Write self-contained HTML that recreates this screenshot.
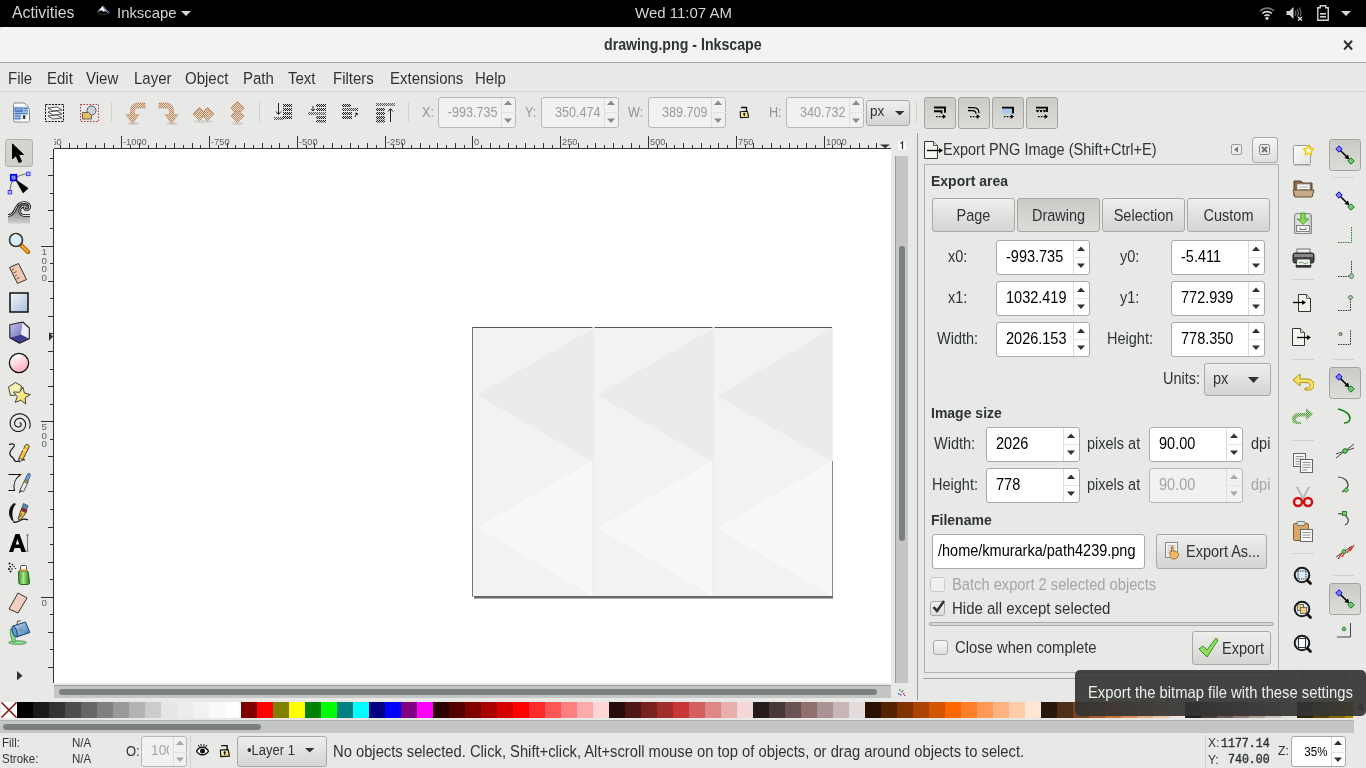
<!DOCTYPE html>
<html><head><meta charset="utf-8">
<style>
*{box-sizing:border-box;margin:0;padding:0}
html,body{width:1366px;height:768px;overflow:hidden;-webkit-font-smoothing:antialiased;background:#e8e8e7;font-family:"Liberation Sans",sans-serif;color:#2e3436;position:relative}
.a{position:absolute}
.t{position:absolute;white-space:nowrap;line-height:1;will-change:transform;transform:scaleY(1.1);transform-origin:0 0.85em}
#topbar .t{transform:none}
#topbar{left:0;top:0;width:1366px;height:27px;background:#000}
#topbar .t{color:#d3d3d3;font-size:15px}
#titlebar{left:0;top:27px;width:1366px;height:36px;background:#f3f3f3;border-radius:5px 5px 0 0;border-bottom:1px solid #a9aaa8;box-shadow:0 1px 0 #d6d6d4}
#menubar{left:0;top:63px;width:1366px;height:29px;background:#e8e8e7;border-bottom:1px solid #d4d4d2}
#menubar .t{font-size:14px;top:72px}
.ent{position:absolute;background:#fff;border:1px solid #a7a9aa;border-radius:3px}
.ent.dis{background:#f1f1f0;border-color:#b6b8b9}
.spin{position:absolute;top:0;bottom:0;border-left:1px solid #dcdcdc}
.btn{position:absolute;border:1px solid #a7a9aa;border-radius:3px;background:linear-gradient(#eeeeed,#d4d4d2)}
.btnp{position:absolute;border:1px solid #a3a5a4;border-radius:3px;background:linear-gradient(#cacac7,#dcdcd9)}
.sep{position:absolute;background:#d3d3d1}
</style></head><body>
<!-- top bar -->
<div id="topbar" class="a">
  <div class="t" style="left:12px;top:5px;font-size:15.8px">Activities</div>
  <div class="t" style="left:116.5px;top:5.5px;font-size:14.9px">Inkscape</div>
  <div class="t" style="left:635px;top:5px">Wed 11:07 AM</div>
</div>
<svg class="a" style="left:96px;top:5px" width="15" height="11" viewBox="0 0 15 11"><defs><linearGradient id="ikw" x1="0" y1="0" x2="1" y2="1"><stop offset="0" stop-color="#fff"/><stop offset=".6" stop-color="#ddd"/><stop offset="1" stop-color="#556"/></linearGradient></defs>
<path d="M0.8 7.3Q7 11.5 14 7.6" fill="none" stroke="#3a3a3a" stroke-width="1"/>
<path d="M6.8 0.8L14 7.6L12 8.2Q9 5 7.5 7 Q5 4.5 2.5 6.5L1.2 7z" fill="url(#ikw)"/>
<path d="M6.8 0.8L14 7.6L12.6 8.2L7.5 3z" fill="#2d4d80"/>
</svg><svg class="a" style="left:181px;top:11px" width="10" height="5"><path d="M0 0L5 5L10 0z" fill="#d3d3d3"/></svg><svg class="a" style="left:1259px;top:6px" width="16" height="14" viewBox="0 0 16 14"><path d="M1 5a10 10 0 0 1 14 0" fill="none" stroke="#777" stroke-width="1.6"/><path d="M3.2 7.5a7 7 0 0 1 9.6 0" fill="none" stroke="#d3d3d3" stroke-width="1.6"/><path d="M5.4 10a4 4 0 0 1 5.2 0" fill="none" stroke="#d3d3d3" stroke-width="1.6"/><circle cx="8" cy="12.3" r="1.6" fill="#d3d3d3"/></svg><svg class="a" style="left:1286px;top:6px" width="18" height="15" viewBox="0 0 18 15"><path d="M0.5 5h3l4-4v12l-4-4h-3z" fill="#d3d3d3"/><path d="M9 4.5a4 4 0 0 1 0 5M11 3a7 7 0 0 1 0 8M13 1.5a9 9 0 0 1 1 9" fill="none" stroke="#666" stroke-width="1.2"/><path d="M12 11l4 3.5M16 11l-4 3.5" stroke="#d3d3d3" stroke-width="1.5"/></svg><svg class="a" style="left:1317px;top:5px" width="12" height="16" viewBox="0 0 12 16"><path d="M.75 2.75h2.5v-2h5.5v2h2.5v12.5h-10.5z" fill="none" stroke="#d3d3d3" stroke-width="1.4"/><rect x="3" y="8" width="6" height="1.6" fill="#d3d3d3"/><rect x="3" y="11" width="6" height="1.6" fill="#d3d3d3"/></svg><svg class="a" style="left:1341px;top:11px" width="10" height="5"><path d="M0 0L5 5L10 0z" fill="#d3d3d3"/></svg><div id="titlebar" class="a"></div>
<div class="t" style="left:604px;top:38px;font-size:14.2px;font-weight:bold;color:#2e3436">drawing.png - Inkscape</div>
<div class="t" style="left:1342px;top:39px;font-size:14.5px;font-weight:bold;color:#2e3436">✕</div>
<div id="menubar" class="a">
</div>
<div class="t" style="left:7.5px;top:69.6px;font-size:15px;transform:scaleY(1.07);transform-origin:0 0">File</div>
<div class="t" style="left:46.5px;top:69.6px;font-size:15px;transform:scaleY(1.07);transform-origin:0 0">Edit</div>
<div class="t" style="left:86.1px;top:69.6px;font-size:15px;transform:scaleY(1.07);transform-origin:0 0">View</div>
<div class="t" style="left:134.4px;top:69.6px;font-size:15px;transform:scaleY(1.07);transform-origin:0 0">Layer</div>
<div class="t" style="left:185.4px;top:69.6px;font-size:15px;transform:scaleY(1.07);transform-origin:0 0">Object</div>
<div class="t" style="left:243.4px;top:69.6px;font-size:15px;transform:scaleY(1.07);transform-origin:0 0">Path</div>
<div class="t" style="left:288.1px;top:69.6px;font-size:15px;transform:scaleY(1.07);transform-origin:0 0">Text</div>
<div class="t" style="left:333.2px;top:69.6px;font-size:15px;transform:scaleY(1.07);transform-origin:0 0">Filters</div>
<div class="t" style="left:389.5px;top:69.6px;font-size:15px;transform:scaleY(1.07);transform-origin:0 0">Extensions</div>
<div class="t" style="left:475.0px;top:69.6px;font-size:15px;transform:scaleY(1.07);transform-origin:0 0">Help</div>


<!-- toolbar -->
<svg class="a" style="left:12px;top:102px" width="19" height="21" viewBox="0 0 19 21">
 <path d="M1.5 2.5Q1.5 1 3 1H12Q17.5 4 17.5 8.5V18.5Q17.5 20 16 20H3Q1.5 20 1.5 18.5z" fill="#fdfdfd" stroke="#858585" stroke-width="1"/>
 <rect x="2.2" y="4.6" width="14" height="13.6" fill="#a8c6ea"/>
 <rect x="2.6" y="5.6" width="8" height="4.6" fill="#4f7fbf"/>
 <path d="M3.5 8.5l2-1.5 2 1 2-2" stroke="#c8dcf4" stroke-width=".8" fill="none"/>
 <path d="M11.5 6.4h4.5M11.5 8.8h4.5M2.6 11.6h13.4M2.6 14.1h6M2.6 16.5h6" stroke="#4f7fbf" stroke-width="1.1"/>
 <rect x="9" y="12.6" width="8" height="6.8" fill="#fdfdfd"/>
 <path d="M10.3 13.6h3.6l-1.3 1.6 1.3 1.6h-3.6l1.3-1.6z" fill="#000"/>
</svg>
<svg class="a" style="left:45px;top:104px" width="20" height="18" viewBox="0 0 20 18">
 <rect x="0.5" y="0.5" width="18" height="17" fill="none" stroke="#000" stroke-dasharray="2,1.2"/>
 <path d="M3 4l9-1 5 3-9 1z" fill="#fff" stroke="#333" stroke-width=".8"/>
 <path d="M3 8l9-1 5 3-9 1z" fill="#fff" stroke="#333" stroke-width=".8"/>
 <path d="M3 12l9-1 5 3-9 1z" fill="#eee" stroke="#333" stroke-width=".8"/>
</svg>
<svg class="a" style="left:80px;top:104px" width="19" height="18" viewBox="0 0 19 18">
 <rect x="0.5" y="0.5" width="18" height="17" fill="none" stroke="#b02020" stroke-dasharray="1.5,1.5" stroke-width=".9"/>
 <circle cx="11.5" cy="6.5" r="4.5" fill="#c9d3de" stroke="#555"/>
 <path d="M2.5 8.5h6l3 3v3.5h-9z" fill="#e5c060" stroke="#555" stroke-width=".9"/>
</svg>
<div class="sep" style="left:111px;top:102px;width:1px;height:20px;background:#d0d0ce"></div>
<svg class="a" style="left:0;top:0;width:0;height:0"><defs>
<pattern id="bk" width="2" height="2" patternUnits="userSpaceOnUse"><rect width="2" height="2" fill="#eee2d6"/><rect width="1" height="1" fill="#b8845a"/><rect x="1" y="1" width="1" height="1" fill="#b8845a"/></pattern>
<pattern id="gk" width="2" height="2" patternUnits="userSpaceOnUse"><rect width="2" height="2" fill="#d8d8d8"/><rect width="1" height="1" fill="#222"/><rect x="1" y="1" width="1" height="1" fill="#222"/></pattern>
</defs></svg>
<svg class="a" style="left:124px;top:101px" width="24" height="26" viewBox="0 0 24 26">
 <ellipse cx="9" cy="22.5" rx="6" ry="1.5" fill="#000" opacity=".12"/>
 <path d="M21 2v5h-7c-3 0-3.5 1.5-3.5 3.5v3h4.5l-6.5 9-6.5-9h4.5v-4c0-5 3-7.5 8-7.5z" fill="url(#bk)" stroke="#c09070" stroke-width=".6"/>
</svg>
<svg class="a" style="left:157px;top:101px" width="24" height="26" viewBox="0 0 24 26">
 <ellipse cx="15" cy="22.5" rx="6" ry="1.5" fill="#000" opacity=".12"/>
 <path d="M2 2v5h7c3 0 3.5 1.5 3.5 3.5v3h-4.5l6.5 9 6.5-9h-4.5v-4c0-5-3-7.5-8-7.5z" fill="url(#bk)" stroke="#c09070" stroke-width=".6"/>
</svg>
<svg class="a" style="left:191px;top:104px" width="25" height="20" viewBox="0 0 25 20">
 <ellipse cx="12.5" cy="17.5" rx="10" ry="1.3" fill="#000" opacity=".1"/>
 <path d="M2 10l6.5-6.5 3 3v1.5h2v-1.5l3-3 6.5 6.5-6.5 6.5-3-3v-1.5h-2v1.5l-3 3z" fill="url(#bk)" stroke="#b07a50" stroke-width=".7"/>
</svg>
<svg class="a" style="left:229px;top:100px" width="17" height="26" viewBox="0 0 17 26">
 <ellipse cx="8.5" cy="23.5" rx="6" ry="1.3" fill="#000" opacity=".1"/>
 <path d="M8.5 1.5l6.5 6.5-3 3.5h-2v1.5h2l3 3-6.5 6.5-6.5-6.5 3-3h2v-1.5h-2l-3-3.5z" fill="url(#bk)" stroke="#b07a50" stroke-width=".7"/>
</svg>
<div class="sep" style="left:259px;top:102px;width:1px;height:20px;background:#d0d0ce"></div>
<svg class="a" style="left:273px;top:102px" width="21" height="21" viewBox="0 0 21 21">
 <path d="M5.5 1v11" stroke="#222" stroke-width="1"/><path d="M3 9.5l2.5 3 2.5-3" fill="none" stroke="#222" stroke-width="1"/>
 <rect x="10" y="2" width="9" height="3" fill="url(#gk)"/><rect x="10" y="6" width="9" height="3" fill="url(#gk)"/><rect x="10" y="10" width="9" height="3" fill="url(#gk)"/><rect x="10" y="14" width="9" height="3" fill="url(#gk)"/>
 <rect x="1" y="15" width="9" height="3" fill="url(#gk)" opacity=".75"/>
</svg>
<svg class="a" style="left:307px;top:102px" width="21" height="21" viewBox="0 0 21 21">
 <rect x="9" y="2" width="10" height="3" fill="url(#gk)"/><rect x="9" y="6" width="10" height="3" fill="url(#gk)"/>
 <rect x="1" y="10" width="18" height="3" fill="url(#gk)" opacity=".7"/>
 <rect x="9" y="14" width="10" height="3" fill="url(#gk)"/><rect x="9" y="18" width="10" height="2.5" fill="url(#gk)"/>
 <path d="M6 4v4.5M4 7l2 2 2-2" fill="none" stroke="#222" stroke-width="1"/>
</svg>
<svg class="a" style="left:341px;top:102px" width="21" height="21" viewBox="0 0 21 21">
 <rect x="1" y="2" width="9" height="3" fill="url(#gk)"/><rect x="1" y="6" width="16" height="3" fill="url(#gk)" opacity=".8"/>
 <rect x="1" y="10" width="10" height="3" fill="url(#gk)"/><rect x="1" y="14" width="10" height="3" fill="url(#gk)"/>
 <path d="M14 15l2-4M14 11.5l2-.5.5 2" fill="none" stroke="#222" stroke-width="1"/>
</svg>
<svg class="a" style="left:375px;top:102px" width="21" height="21" viewBox="0 0 21 21">
 <rect x="1" y="1" width="19" height="3" fill="url(#gk)" opacity=".7"/>
 <rect x="1" y="6" width="9" height="3" fill="url(#gk)"/><rect x="1" y="10" width="9" height="3" fill="url(#gk)"/><rect x="1" y="14" width="9" height="3" fill="url(#gk)"/><rect x="1" y="17.5" width="9" height="3" fill="url(#gk)"/>
 <path d="M15.5 20V7M13 9.5l2.5-3 2.5 3" fill="none" stroke="#222" stroke-width="1"/>
</svg>
<div class="sep" style="left:408px;top:102px;width:1px;height:20px;background:#d0d0ce"></div>

<div class="t" style="left:422px;top:107px;font-size:12.6px;color:#929495">X:</div><div class="ent dis" style="left:438px;top:97px;width:78px;height:31px"><div class="spin" style="left:62px;width:15px"><div class="a" style="left:0;right:0;top:14px;height:1px;background:#e2e2e2"></div><svg class="a" style="left:1px;top:2px" width="10" height="6"><path d="M1 5L5 0.6L9 5z" fill="#888a8b"/></svg><svg class="a" style="left:1px;top:20px" width="10" height="6"><path d="M1 0.6L5 5L9 0.6z" fill="#888a8b"/></svg></div></div><div class="t" style="left:430px;top:106.5px;width:67.5px;text-align:right;font-size:12.6px;color:#9a9c9d">-993.735</div><div class="t" style="left:525px;top:107px;font-size:12.6px;color:#929495">Y:</div><div class="ent dis" style="left:541px;top:97px;width:78px;height:31px"><div class="spin" style="left:62px;width:15px"><div class="a" style="left:0;right:0;top:14px;height:1px;background:#e2e2e2"></div><svg class="a" style="left:1px;top:2px" width="10" height="6"><path d="M1 5L5 0.6L9 5z" fill="#888a8b"/></svg><svg class="a" style="left:1px;top:20px" width="10" height="6"><path d="M1 0.6L5 5L9 0.6z" fill="#888a8b"/></svg></div></div><div class="t" style="left:533px;top:106.5px;width:67.5px;text-align:right;font-size:12.6px;color:#9a9c9d">350.474</div><div class="t" style="left:628px;top:107px;font-size:12.6px;color:#929495">W:</div><div class="ent dis" style="left:648px;top:97px;width:78px;height:31px"><div class="spin" style="left:62px;width:15px"><div class="a" style="left:0;right:0;top:14px;height:1px;background:#e2e2e2"></div><svg class="a" style="left:1px;top:2px" width="10" height="6"><path d="M1 5L5 0.6L9 5z" fill="#888a8b"/></svg><svg class="a" style="left:1px;top:20px" width="10" height="6"><path d="M1 0.6L5 5L9 0.6z" fill="#888a8b"/></svg></div></div><div class="t" style="left:640px;top:106.5px;width:67.5px;text-align:right;font-size:12.6px;color:#9a9c9d">389.709</div><svg class="a" style="left:739px;top:106px" width="11" height="13" viewBox="0 0 11 13"><defs><linearGradient id="lkg" x1="0" y1="0" x2="1" y2="1"><stop offset="0" stop-color="#fffef0"/><stop offset="1" stop-color="#e8c840"/></linearGradient></defs><path d="M2 1.5H7.5V5.5" fill="none" stroke="#111" stroke-width="1.3"/><path d="M1.2 5.7L8.4 5.3L9.6 11.2L1.6 11.8z" fill="url(#lkg)" stroke="#111" stroke-width="1.1" stroke-linejoin="round"/><circle cx="5.2" cy="7.8" r="1" fill="#000"/><rect x="4.8" y="8" width="0.9" height="2.2" fill="#000"/></svg><div class="t" style="left:769px;top:107px;font-size:12.6px;color:#929495">H:</div><div class="ent dis" style="left:786px;top:97px;width:78px;height:31px"><div class="spin" style="left:62px;width:15px"><div class="a" style="left:0;right:0;top:14px;height:1px;background:#e2e2e2"></div><svg class="a" style="left:1px;top:2px" width="10" height="6"><path d="M1 5L5 0.6L9 5z" fill="#888a8b"/></svg><svg class="a" style="left:1px;top:20px" width="10" height="6"><path d="M1 0.6L5 5L9 0.6z" fill="#888a8b"/></svg></div></div><div class="t" style="left:778px;top:106.5px;width:67.5px;text-align:right;font-size:12.6px;color:#9a9c9d">340.732</div><div class="btn" style="left:866px;top:100px;width:44px;height:26px"></div><div class="t" style="left:869.5px;top:104.8px;font-size:13.6px;color:#2e3436">px</div><svg class="a" style="left:894.5px;top:111px" width="10" height="6"><path d="M0 0L4.7 4.6L9.4 0z" fill="#2e3436"/></svg><div class="sep" style="left:916px;top:102px;width:1px;height:20px;background:#d0d0ce"></div><div class="btnp" style="left:924px;top:97px;width:32px;height:32px"></div><div class="btnp" style="left:958px;top:97px;width:32px;height:32px"></div><div class="btnp" style="left:992px;top:97px;width:32px;height:32px"></div><div class="btnp" style="left:1026px;top:97px;width:32px;height:32px"></div><svg class="a" style="left:933px;top:106px" width="14" height="14" viewBox="0 0 14 14"><path d="M1 1.5H12V6.8M1 5.2H8.5V7.5" fill="none" stroke="#000" stroke-width="1.9"/><path d="M3 10.6H10" stroke="#000" stroke-width="1.1" stroke-dasharray="1.6,1.2"/><path d="M9.8 8.3l3.2 2.3-3.2 2.3z" fill="#000"/></svg>
<svg class="a" style="left:967px;top:106px" width="14" height="14" viewBox="0 0 14 14"><path d="M1 1.6H6.5Q12 1.6 12 7M1 4.6H5.5Q9 4.6 9 7.8" fill="none" stroke="#000" stroke-width="1.2"/><path d="M3 10.6H10" stroke="#000" stroke-width="1.1" stroke-dasharray="1.6,1.2"/><path d="M9.8 8.3l3.2 2.3-3.2 2.3z" fill="#000"/></svg>
<svg class="a" style="left:1001px;top:106px" width="14" height="14" viewBox="0 0 14 14"><rect x="1" y="2.4" width="10" height="5.4" fill="#a9c9ec"/><path d="M1 1.6H12V7.5" fill="none" stroke="#000" stroke-width="1.9"/><path d="M3 10.6H10" stroke="#000" stroke-width="1.1" stroke-dasharray="1.6,1.2"/><path d="M9.8 8.3l3.2 2.3-3.2 2.3z" fill="#000"/></svg>
<svg class="a" style="left:1035px;top:106px" width="14" height="14" viewBox="0 0 14 14"><path d="M1 1.6H12V6" fill="none" stroke="#000" stroke-width="1.9"/><g fill="#000"><circle cx="2.5" cy="5.2" r="1.1"/><circle cx="6" cy="5.2" r="1.1"/><circle cx="9.5" cy="5.2" r="1.1"/></g><path d="M1 4l1.5 1.2L4 4M4.5 4l1.5 1.2L7.5 4M8 4l1.5 1.2L11 4" fill="none" stroke="#000" stroke-width=".8"/><path d="M3 10.6H10" stroke="#000" stroke-width="1.1" stroke-dasharray="1.6,1.2"/><path d="M9.8 8.3l3.2 2.3-3.2 2.3z" fill="#000"/></svg>

<!-- toolbox -->
<div class="btnp" style="left:5px;top:139px;width:28px;height:28px;border-color:#b0b1b0;background:linear-gradient(#d5d5d2,#cececb)"></div>
<svg class="a" style="left:11px;top:143px" width="15" height="21" viewBox="0 0 15 21"><path d="M1.5 1v15l3.5-3.5 3 7 2.5-1-3-7h5z" fill="#000" stroke="#000" stroke-linejoin="round"/></svg>
<svg class="a" style="left:4px;top:168px" width="30" height="30" viewBox="0 0 30 30">
<path d="M6 24C6 15 9 7.5 24 5.5" fill="none" stroke="#707070" stroke-width="1.1"/>
<rect x="6.8" y="6.8" width="5.6" height="5.6" fill="#a0a0e8" stroke="#0000ff" stroke-width="1.7"/>
<path d="M8.5 10.5l2-2" stroke="#0000ff" stroke-width=".8"/>
<rect x="22.6" y="4.2" width="3.4" height="3.4" fill="#c0c0ff" stroke="#3a3aff" stroke-width="1"/>
<rect x="4.2" y="22.5" width="3.4" height="3.4" fill="#c0c0ff" stroke="#3a3aff" stroke-width="1"/>
<path d="M11.7 11.7L24.2 20.3L19.1 25z" fill="#000" stroke="#000" stroke-width=".6" stroke-linejoin="round"/>
</svg>
<svg class="a" style="left:4px;top:198px" width="30" height="30" viewBox="0 0 30 30">
<defs><linearGradient id="twg" x1="0" y1="0" x2="0" y2="1"><stop offset="0" stop-color="#606060"/><stop offset="1" stop-color="#d0d0d0"/></linearGradient></defs>
<path d="M4 17.5C8 17.5 10 15 12 10C14 6 17 4.5 20 4.5C24 4.5 26.5 7 25.5 10C24.5 12.5 21 12.5 20.5 10.5C20 9 21.5 8.5 22.5 9C21 7 17 8 16 11.5C15 14.5 17 17.5 20 17.5H26V25.5H4z" fill="url(#twg)"/>
<path d="M4 17.5C8 17.5 10 15 12 10C14 6 17 4.5 20 4.5C24 4.5 26.5 7 25.5 10C24.5 12.5 21 12.5 20.5 10.5C20 9 21.5 8.5 22.5 9C21 7 17 8 16 11.5C15 14.5 17 17.5 20 17.5H26" fill="none" stroke="#111" stroke-width="2.6"/>
<path d="M4 17.5C8 17.5 10 15 12 10C14 6 17 4.5 20 4.5C24 4.5 26.5 7 25.5 10C24.5 12.5 21 12.5 20.5 10.5C20 9 21.5 8.5 22.5 9C21 7 17 8 16 11.5C15 14.5 17 17.5 20 17.5H26" fill="none" stroke="#fff" stroke-width=".9"/>
</svg>
<svg class="a" style="left:8px;top:232px" width="22" height="22" viewBox="0 0 22 22"><path d="M13 13l7 7" stroke="#b06000" stroke-width="4.5" stroke-linecap="round"/><path d="M13.5 13.5l6 6" stroke="#f0a030" stroke-width="2.5" stroke-linecap="round"/><circle cx="8" cy="8" r="6.5" fill="#d8ecf8" stroke="#333" stroke-width="1.6"/><path d="M4.5 6a4 4 0 0 1 4-3" stroke="#fff" stroke-width="1.5" fill="none"/></svg>
<svg class="a" style="left:8px;top:262px" width="20" height="22" viewBox="0 0 20 22"><path d="M1.5 5.5l9-4 8 16-9 4z" fill="#f0c8b0" stroke="#333" stroke-width="1"/><path d="M4 8l2-1M5.5 11l3-1.5M7 14l2-1M8.5 17l3-1.5" stroke="#333" stroke-width=".8"/></svg>
<svg class="a" style="left:9px;top:292px" width="20" height="21" viewBox="0 0 20 21"><defs><linearGradient id="rg" x1="0" y1="0" x2="1" y2="1"><stop offset="0" stop-color="#f4f8fc"/><stop offset="1" stop-color="#a8bcd8"/></linearGradient></defs><rect x="1" y="1" width="18" height="19" fill="url(#rg)" stroke="#000" stroke-width="1.4"/></svg>
<svg class="a" style="left:8px;top:321px" width="23" height="24" viewBox="0 0 23 24">
<defs><linearGradient id="bxl" x1="0" y1="0" x2="1" y2="1"><stop offset="0" stop-color="#c8c8ec"/><stop offset="1" stop-color="#7070b8"/></linearGradient></defs>
<path d="M1.8 3.8L14.8 1L13 13.6L1.8 16.8z" fill="url(#bxl)"/>
<path d="M14.8 1L21.3 7V17.7L13 13.6z" fill="#ececfc"/>
<path d="M13 13.6L21.3 17.7L11.5 22.2L1.8 16.8z" fill="#3e3e90"/>
<path d="M1.8 3.8L14.8 1L21.3 7V17.7L11.5 22.2L1.8 16.8z" fill="none" stroke="#222" stroke-width="1.1" stroke-linejoin="round"/>
</svg>
<svg class="a" style="left:8px;top:352px" width="22" height="22" viewBox="0 0 22 22"><defs><linearGradient id="cg2" x1=".2" y1=".1" x2=".7" y2="1"><stop offset="0" stop-color="#ffffff"/><stop offset="1" stop-color="#ffa8b8"/></linearGradient></defs><circle cx="11" cy="11" r="9.6" fill="url(#cg2)" stroke="#111" stroke-width="1.3"/></svg>
<svg class="a" style="left:7px;top:381px" width="24" height="25" viewBox="0 0 24 25"><defs><linearGradient id="stg" x1="0" y1="0" x2="1" y2="1"><stop offset="0" stop-color="#fffad0"/><stop offset="1" stop-color="#f0d040"/></linearGradient></defs><path d="M1.5 6L8.5 1.5L14.5 5L13 13.5L3.5 14.5z" fill="#f8f0b0" stroke="#333" stroke-width=".9" stroke-linejoin="round"/><path d="M15.84 6.10 L17.45 12.01 L23.38 13.53 L18.26 16.88 L18.64 22.99 L13.87 19.15 L8.18 21.41 L10.36 15.69 L6.45 10.97 L12.57 11.27z" fill="url(#stg)" stroke="#333" stroke-width=".9" stroke-linejoin="round"/></svg>
<svg class="a" style="left:7px;top:411px" width="24" height="24" viewBox="0 0 24 24"><path d="M12.51 11.71 L12.56 11.71 L12.61 11.71 L12.66 11.71 L12.71 11.71 L12.76 11.71 L12.82 11.72 L12.87 11.73 L12.92 11.74 L12.98 11.76 L13.03 11.78 L13.09 11.80 L13.14 11.82 L13.20 11.84 L13.25 11.87 L13.30 11.90 L13.35 11.93 L13.41 11.97 L13.46 12.01 L13.51 12.05 L13.56 12.09 L13.60 12.14 L13.65 12.18 L13.69 12.24 L13.74 12.29 L13.78 12.34 L13.82 12.40 L13.86 12.46 L13.89 12.52 L13.93 12.59 L13.96 12.65 L13.99 12.72 L14.02 12.79 L14.04 12.87 L14.06 12.94 L14.08 13.01 L14.10 13.09 L14.11 13.17 L14.12 13.25 L14.13 13.33 L14.13 13.41 L14.14 13.49 L14.13 13.58 L14.13 13.66 L14.12 13.75 L14.11 13.83 L14.09 13.92 L14.07 14.01 L14.05 14.09 L14.03 14.18 L14.00 14.26 L13.96 14.35 L13.93 14.43 L13.89 14.52 L13.84 14.60 L13.80 14.68 L13.74 14.77 L13.69 14.85 L13.63 14.92 L13.57 15.00 L13.51 15.08 L13.44 15.15 L13.37 15.22 L13.29 15.29 L13.21 15.36 L13.13 15.42 L13.05 15.49 L12.96 15.54 L12.87 15.60 L12.78 15.65 L12.68 15.71 L12.59 15.75 L12.49 15.80 L12.38 15.84 L12.28 15.87 L12.17 15.91 L12.06 15.94 L11.95 15.96 L11.84 15.98 L11.72 16.00 L11.61 16.02 L11.49 16.03 L11.37 16.03 L11.25 16.03 L11.13 16.03 L11.01 16.02 L10.89 16.01 L10.77 15.99 L10.64 15.97 L10.52 15.94 L10.40 15.91 L10.28 15.87 L10.16 15.83 L10.04 15.78 L9.92 15.73 L9.80 15.68 L9.68 15.62 L9.57 15.55 L9.46 15.49 L9.34 15.41 L9.24 15.33 L9.13 15.25 L9.02 15.16 L8.92 15.07 L8.82 14.98 L8.73 14.88 L8.63 14.77 L8.54 14.66 L8.46 14.55 L8.37 14.44 L8.29 14.32 L8.22 14.19 L8.15 14.07 L8.08 13.94 L8.02 13.80 L7.96 13.67 L7.91 13.53 L7.86 13.39 L7.81 13.24 L7.78 13.10 L7.74 12.95 L7.71 12.80 L7.69 12.65 L7.67 12.49 L7.66 12.34 L7.66 12.18 L7.66 12.02 L7.66 11.86 L7.67 11.70 L7.69 11.55 L7.71 11.39 L7.74 11.23 L7.78 11.07 L7.82 10.91 L7.86 10.75 L7.92 10.59 L7.97 10.44 L8.04 10.28 L8.11 10.13 L8.18 9.98 L8.27 9.83 L8.35 9.68 L8.45 9.54 L8.55 9.40 L8.65 9.26 L8.76 9.12 L8.88 8.99 L9.00 8.86 L9.13 8.74 L9.26 8.62 L9.39 8.50 L9.53 8.39 L9.68 8.29 L9.83 8.18 L9.98 8.09 L10.14 7.99 L10.31 7.91 L10.47 7.83 L10.64 7.75 L10.82 7.68 L10.99 7.62 L11.17 7.56 L11.35 7.51 L11.54 7.46 L11.73 7.42 L11.92 7.39 L12.11 7.37 L12.30 7.35 L12.50 7.34 L12.69 7.33 L12.89 7.34 L13.09 7.35 L13.29 7.36 L13.48 7.39 L13.68 7.42 L13.88 7.46 L14.08 7.50 L14.27 7.56 L14.47 7.62 L14.66 7.69 L14.85 7.76 L15.04 7.84 L15.23 7.93 L15.41 8.03 L15.59 8.13 L15.77 8.24 L15.95 8.36 L16.12 8.48 L16.29 8.61 L16.45 8.75 L16.61 8.89 L16.77 9.04 L16.92 9.20 L17.06 9.36 L17.20 9.53 L17.34 9.70 L17.47 9.88 L17.59 10.06 L17.71 10.25 L17.82 10.45 L17.92 10.65 L18.02 10.85 L18.11 11.05 L18.19 11.27 L18.26 11.48 L18.33 11.70 L18.39 11.92 L18.45 12.14 L18.49 12.37 L18.53 12.60 L18.55 12.83 L18.58 13.06 L18.59 13.30 L18.59 13.53 L18.59 13.77 L18.57 14.00 L18.55 14.24 L18.52 14.48 L18.48 14.71 L18.43 14.95 L18.38 15.18 L18.31 15.42 L18.24 15.65 L18.16 15.88 L18.07 16.11 L17.97 16.33 L17.86 16.56 L17.75 16.78 L17.62 16.99 L17.49 17.20 L17.35 17.41 L17.20 17.62 L17.05 17.81 L16.89 18.01 L16.72 18.20 L16.54 18.38 L16.35 18.56 L16.16 18.73 L15.96 18.89 L15.76 19.05 L15.55 19.20 L15.33 19.35 L15.11 19.48 L14.88 19.61 L14.65 19.73 L14.41 19.85 L14.17 19.95 L13.92 20.05 L13.67 20.14 L13.41 20.22 L13.15 20.29 L12.89 20.35 L12.62 20.40 L12.36 20.44 L12.09 20.48 L11.82 20.50 L11.54 20.51 L11.27 20.52 L10.99 20.51 L10.72 20.50 L10.44 20.47 L10.16 20.44 L9.89 20.39 L9.61 20.34 L9.34 20.27 L9.07 20.20 L8.80 20.11 L8.53 20.02 L8.27 19.91 L8.00 19.80 L7.75 19.68 L7.49 19.54 L7.24 19.40 L6.99 19.25 L6.75 19.09 L6.52 18.92 L6.29 18.74 L6.06 18.55 L5.84 18.35 L5.63 18.15 L5.43 17.93 L5.23 17.71 L5.04 17.49 L4.86 17.25 L4.68 17.01 L4.51 16.76 L4.36 16.50 L4.21 16.24 L4.07 15.97 L3.94 15.70 L3.81 15.42 L3.70 15.14 L3.60 14.85 L3.51 14.55 L3.43 14.26 L3.35 13.96 L3.29 13.65 L3.24 13.35 L3.20 13.04 L3.18 12.73 L3.16 12.41 L3.15 12.10 L3.16 11.78 L3.17 11.47 L3.20 11.15 L3.24 10.84 L3.29 10.52 L3.35 10.21 L3.42 9.90 L3.51 9.59 L3.60 9.28 L3.71 8.97 L3.83 8.67 L3.96 8.37 L4.10 8.08 L4.25 7.79 L4.41 7.50 L4.58 7.22 L4.76 6.95 L4.95 6.68 L5.15 6.42 L5.37 6.16 L5.59 5.91 L5.82 5.67 L6.06 5.44 L6.31 5.21 L6.56 4.99 L6.83 4.78 L7.10 4.58 L7.38 4.39 L7.67 4.21 L7.97 4.04 L8.27 3.88 L8.58 3.73 L8.89 3.59 L9.21 3.46 L9.54 3.35 L9.87 3.24 L10.20 3.15 L10.54 3.06 L10.88 2.99 L11.23 2.93 L11.58 2.89 L11.93 2.85 L12.28 2.83 L12.63 2.82 L12.99 2.83 L13.34 2.84 L13.70 2.87 L14.05 2.91 L14.41 2.97 L14.76 3.03 L15.11 3.11 L15.46 3.20 L15.81 3.31 L16.15 3.42 L16.49 3.55 L16.83 3.70 L17.16 3.85 L17.48 4.02 L17.80 4.19 L18.12 4.38 L18.43 4.59 L18.73 4.80 L19.03 5.02 L19.32 5.26 L19.60 5.50 L19.87 5.76 L20.13 6.03 L20.39 6.30 L20.63 6.59 L20.87 6.88 L21.09 7.18 L21.31 7.50 L21.51 7.82 L21.70 8.15 L21.89 8.48 L22.06 8.82 L22.21 9.17 L22.36 9.53 L22.49 9.89 L22.62 10.26 L22.72 10.63 L22.82 11.00 L22.90 11.38 L22.97 11.77 L23.02 12.15 L23.07 12.54 L23.09 12.94 L23.11 13.33 L23.11 13.72 L23.09 14.12 L23.06 14.51 L23.02 14.91 L22.97 15.30 L22.89 15.69 L22.81 16.08 L22.71 16.47 L22.60 16.86 L22.47 17.24 L22.33 17.62" fill="none" stroke="#1a1a1a" stroke-width="1.15"/></svg>
<svg class="a" style="left:7px;top:442px" width="24" height="23" viewBox="0 0 24 23">
<path d="M2 2.5c3-1 6-1 5 2-1 2-5 4-4 8 1 3 3 2 4 5 .5 2 3 2.5 5 1.5 2-1 4-2 6-1" fill="none" stroke="#111" stroke-width="1.2"/>
<path d="M12 16l6.5-13c.8-1.6 4.5.2 3.7 1.8l-6.5 13-3.5 2z" fill="#f8c838" stroke="#333" stroke-width=".9"/>
<path d="M14 6.5l4.5 2.2" stroke="#fff6c0" stroke-width="1.2"/>
<path d="M12 16l3.7 1.8-3.5 2.2z" fill="#fff" stroke="#333" stroke-width=".8"/>
<path d="M12.2 18.5l.9.4-1 .8z" fill="#000"/>
</svg>
<svg class="a" style="left:7px;top:472px" width="24" height="23" viewBox="0 0 24 23">
<path d="M1.5 2.5h12c-4 3-8 7-6 16h-6" fill="none" stroke="#111" stroke-width="1.1"/>
<path d="M13 18l4-8.5 3.5 1.7-4 8.5z" fill="#e8e8e8" stroke="#333" stroke-width=".8"/>
<path d="M17 9.5l1-2 3.5 1.7-1 2z" fill="#f0c030" stroke="#333" stroke-width=".7"/>
<path d="M18 7.5l2.5-5.5c.7-1.5 3.5-.2 2.8 1.4l-2.5 5.8z" fill="#6aa0d0" stroke="#2a4a70" stroke-width=".8"/>
<path d="M13 18l-1.5 3.5 3-2z" fill="#222"/>
</svg>
<svg class="a" style="left:7px;top:502px" width="24" height="23" viewBox="0 0 24 23">
<path d="M7 1c-4 3-6 8-4.5 13 1 3 2.5 5 4.5 6-1-3-2-6-1.5-10 .3-3 1.5-6 3.5-8z" fill="#111"/>
<path d="M6 20c3 1 6-1 8-2 2-1 5-1 7 0" fill="none" stroke="#111" stroke-width="1.3"/>
<path d="M11 17l3-9 5 2.5-5.5 7.5z" fill="#f0c040" stroke="#333" stroke-width=".9"/>
<path d="M14 8l1-2.5 5 2.5-1 2.5z" fill="#c02020" stroke="#333" stroke-width=".7"/>
<path d="M15 5.5l1.5-4 4.5 2.2-1.5 4.3z" fill="#5a90c0" stroke="#333" stroke-width=".7"/>
<path d="M12.5 15.5l2.5-4" stroke="#333" stroke-width=".8"/>
</svg>
<svg class="a" style="left:8px;top:532px" width="22" height="22" viewBox="0 0 22 22"><path d="M1 20l6.5-18h4l6.5 18h-4.5l-1.3-4h-5.7l-1.3 4zM7.7 12.5h3.6l-1.8-5.5z" fill="#000"/><path d="M18 3h3M19.5 3v16M18 19h3" stroke="#555" stroke-width=".8"/></svg>
<svg class="a" style="left:7px;top:562px" width="24" height="24" viewBox="0 0 24 24">
<defs><linearGradient id="spg" x1="0" y1="0" x2="1" y2="0"><stop offset="0" stop-color="#3a9020"/><stop offset=".45" stop-color="#a8e888"/><stop offset="1" stop-color="#2a7a18"/></linearGradient></defs>
<g fill="#111"><circle cx="2.5" cy="1.6" r="1"/><circle cx="5.5" cy="2.6" r=".8"/><circle cx="3.2" cy="4.6" r=".9"/><circle cx="7" cy="4.5" r=".7"/><circle cx="2" cy="7" r="1"/><circle cx="5" cy="7" r=".8"/><circle cx="8.5" cy="6.5" r=".6"/><circle cx="3.5" cy="9.5" r="1"/></g>
<path d="M11.5 10.5Q11.5 8.5 13.5 8.5H19Q21 8.5 21.3 10.5L22.5 20.5Q22.7 22.5 20.5 22.5H14Q12 22.5 11.8 20.5z" fill="url(#spg)" stroke="#1f5a10" stroke-width=".9"/>
<rect x="13.5" y="3.5" width="6" height="5.5" rx="1.2" fill="#f8f8f8" stroke="#333" stroke-width=".9"/>
<rect x="13.5" y="7.2" width="6" height="1.8" fill="#f0a030"/>
</svg>
<svg class="a" style="left:8px;top:592px" width="20" height="22" viewBox="0 0 20 22"><path d="M1 17l9-16 9 5-9 15z" fill="#f5d0c0" stroke="#333" stroke-width="1"/></svg>
<svg class="a" style="left:7px;top:620px" width="24" height="25" viewBox="0 0 24 25">
<defs><linearGradient id="bkg" x1="0" y1="0" x2="1" y2="1"><stop offset="0" stop-color="#c0e0f8"/><stop offset="1" stop-color="#3a78b8"/></linearGradient></defs>
<ellipse cx="10.5" cy="22.6" rx="9" ry="1.8" fill="#98dc98" stroke="#3a8a40" stroke-width=".8"/>
<path d="M3.5 9C2.5 14 4.5 18 5.5 22L9 22C8 17.5 7 13 8.5 9z" fill="#88d488" stroke="#3a8a40" stroke-width=".7"/>
<path d="M6 6L18.5 2L22.8 12.5L9.5 17z" fill="url(#bkg)" stroke="#1a3a60" stroke-width="1"/>
<ellipse cx="7.6" cy="11.5" rx="2.2" ry="5.6" transform="rotate(-18 7.6 11.5)" fill="#5a9ad0" stroke="#1a3a60" stroke-width=".9"/>
<path d="M10 5.5L10.5 1H14" fill="none" stroke="#444" stroke-width=".9"/>
<circle cx="13.5" cy="9.5" r="1" fill="#eee" stroke="#333" stroke-width=".6"/>
</svg><svg class="a" style="left:17px;top:670.5px" width="6" height="10"><path d="M0 0L5.5 4.8L0 9.6z" fill="#2e3436"/></svg>

<!-- canvas -->
<svg class="a" style="left:54px;top:133px;will-change:transform" width="837" height="16" viewBox="0 0 837 16"><text x="-16" y="11.5" font-size="9.3" fill="#5d5f60" font-family="Liberation Sans">-1250</text><rect x="0" y="15" width="837" height="1" fill="#2e3436"/><path d="M6.5 12V15" stroke="#2e3436" stroke-width="1"/><path d="M15.5 10V15" stroke="#2e3436" stroke-width="1"/><path d="M23.5 12V15" stroke="#2e3436" stroke-width="1"/><path d="M32.5 10V15" stroke="#2e3436" stroke-width="1"/><path d="M41.5 12V15" stroke="#2e3436" stroke-width="1"/><path d="M50.5 10V15" stroke="#2e3436" stroke-width="1"/><path d="M59.5 12V15" stroke="#2e3436" stroke-width="1"/><path d="M67.5 3V15" stroke="#2e3436" stroke-width="1"/><text x="69.0" y="11.5" font-size="9.3" fill="#5d5f60" font-family="Liberation Sans">-1000</text><path d="M76.5 12V15" stroke="#2e3436" stroke-width="1"/><path d="M85.5 10V15" stroke="#2e3436" stroke-width="1"/><path d="M94.5 12V15" stroke="#2e3436" stroke-width="1"/><path d="M102.5 10V15" stroke="#2e3436" stroke-width="1"/><path d="M111.5 12V15" stroke="#2e3436" stroke-width="1"/><path d="M120.5 10V15" stroke="#2e3436" stroke-width="1"/><path d="M129.5 12V15" stroke="#2e3436" stroke-width="1"/><path d="M138.5 10V15" stroke="#2e3436" stroke-width="1"/><path d="M146.5 12V15" stroke="#2e3436" stroke-width="1"/><path d="M155.5 3V15" stroke="#2e3436" stroke-width="1"/><text x="157.0" y="11.5" font-size="9.3" fill="#5d5f60" font-family="Liberation Sans">-750</text><path d="M164.5 12V15" stroke="#2e3436" stroke-width="1"/><path d="M173.5 10V15" stroke="#2e3436" stroke-width="1"/><path d="M181.5 12V15" stroke="#2e3436" stroke-width="1"/><path d="M190.5 10V15" stroke="#2e3436" stroke-width="1"/><path d="M199.5 12V15" stroke="#2e3436" stroke-width="1"/><path d="M208.5 10V15" stroke="#2e3436" stroke-width="1"/><path d="M217.5 12V15" stroke="#2e3436" stroke-width="1"/><path d="M225.5 10V15" stroke="#2e3436" stroke-width="1"/><path d="M234.5 12V15" stroke="#2e3436" stroke-width="1"/><path d="M243.5 3V15" stroke="#2e3436" stroke-width="1"/><text x="245.0" y="11.5" font-size="9.3" fill="#5d5f60" font-family="Liberation Sans">-500</text><path d="M252.5 12V15" stroke="#2e3436" stroke-width="1"/><path d="M260.5 10V15" stroke="#2e3436" stroke-width="1"/><path d="M269.5 12V15" stroke="#2e3436" stroke-width="1"/><path d="M278.5 10V15" stroke="#2e3436" stroke-width="1"/><path d="M287.5 12V15" stroke="#2e3436" stroke-width="1"/><path d="M296.5 10V15" stroke="#2e3436" stroke-width="1"/><path d="M304.5 12V15" stroke="#2e3436" stroke-width="1"/><path d="M313.5 10V15" stroke="#2e3436" stroke-width="1"/><path d="M322.5 12V15" stroke="#2e3436" stroke-width="1"/><path d="M331.5 3V15" stroke="#2e3436" stroke-width="1"/><text x="333.0" y="11.5" font-size="9.3" fill="#5d5f60" font-family="Liberation Sans">-250</text><path d="M339.5 12V15" stroke="#2e3436" stroke-width="1"/><path d="M348.5 10V15" stroke="#2e3436" stroke-width="1"/><path d="M357.5 12V15" stroke="#2e3436" stroke-width="1"/><path d="M366.5 10V15" stroke="#2e3436" stroke-width="1"/><path d="M375.5 12V15" stroke="#2e3436" stroke-width="1"/><path d="M383.5 10V15" stroke="#2e3436" stroke-width="1"/><path d="M392.5 12V15" stroke="#2e3436" stroke-width="1"/><path d="M401.5 10V15" stroke="#2e3436" stroke-width="1"/><path d="M410.5 12V15" stroke="#2e3436" stroke-width="1"/><path d="M418.5 3V15" stroke="#2e3436" stroke-width="1"/><text x="420.0" y="11.5" font-size="9.3" fill="#5d5f60" font-family="Liberation Sans">0</text><path d="M427.5 12V15" stroke="#2e3436" stroke-width="1"/><path d="M436.5 10V15" stroke="#2e3436" stroke-width="1"/><path d="M445.5 12V15" stroke="#2e3436" stroke-width="1"/><path d="M454.5 10V15" stroke="#2e3436" stroke-width="1"/><path d="M462.5 12V15" stroke="#2e3436" stroke-width="1"/><path d="M471.5 10V15" stroke="#2e3436" stroke-width="1"/><path d="M480.5 12V15" stroke="#2e3436" stroke-width="1"/><path d="M489.5 10V15" stroke="#2e3436" stroke-width="1"/><path d="M498.5 12V15" stroke="#2e3436" stroke-width="1"/><path d="M506.5 3V15" stroke="#2e3436" stroke-width="1"/><text x="508.0" y="11.5" font-size="9.3" fill="#5d5f60" font-family="Liberation Sans">250</text><path d="M515.5 12V15" stroke="#2e3436" stroke-width="1"/><path d="M524.5 10V15" stroke="#2e3436" stroke-width="1"/><path d="M533.5 12V15" stroke="#2e3436" stroke-width="1"/><path d="M541.5 10V15" stroke="#2e3436" stroke-width="1"/><path d="M550.5 12V15" stroke="#2e3436" stroke-width="1"/><path d="M559.5 10V15" stroke="#2e3436" stroke-width="1"/><path d="M568.5 12V15" stroke="#2e3436" stroke-width="1"/><path d="M577.5 10V15" stroke="#2e3436" stroke-width="1"/><path d="M585.5 12V15" stroke="#2e3436" stroke-width="1"/><path d="M594.5 3V15" stroke="#2e3436" stroke-width="1"/><text x="596.0" y="11.5" font-size="9.3" fill="#5d5f60" font-family="Liberation Sans">500</text><path d="M603.5 12V15" stroke="#2e3436" stroke-width="1"/><path d="M612.5 10V15" stroke="#2e3436" stroke-width="1"/><path d="M620.5 12V15" stroke="#2e3436" stroke-width="1"/><path d="M629.5 10V15" stroke="#2e3436" stroke-width="1"/><path d="M638.5 12V15" stroke="#2e3436" stroke-width="1"/><path d="M647.5 10V15" stroke="#2e3436" stroke-width="1"/><path d="M656.5 12V15" stroke="#2e3436" stroke-width="1"/><path d="M664.5 10V15" stroke="#2e3436" stroke-width="1"/><path d="M673.5 12V15" stroke="#2e3436" stroke-width="1"/><path d="M682.5 3V15" stroke="#2e3436" stroke-width="1"/><text x="684.0" y="11.5" font-size="9.3" fill="#5d5f60" font-family="Liberation Sans">750</text><path d="M691.5 12V15" stroke="#2e3436" stroke-width="1"/><path d="M699.5 10V15" stroke="#2e3436" stroke-width="1"/><path d="M708.5 12V15" stroke="#2e3436" stroke-width="1"/><path d="M717.5 10V15" stroke="#2e3436" stroke-width="1"/><path d="M726.5 12V15" stroke="#2e3436" stroke-width="1"/><path d="M735.5 10V15" stroke="#2e3436" stroke-width="1"/><path d="M743.5 12V15" stroke="#2e3436" stroke-width="1"/><path d="M752.5 10V15" stroke="#2e3436" stroke-width="1"/><path d="M761.5 12V15" stroke="#2e3436" stroke-width="1"/><path d="M770.5 3V15" stroke="#2e3436" stroke-width="1"/><text x="772.0" y="11.5" font-size="9.3" fill="#5d5f60" font-family="Liberation Sans">1000</text><path d="M778.5 12V15" stroke="#2e3436" stroke-width="1"/><path d="M787.5 10V15" stroke="#2e3436" stroke-width="1"/><path d="M796.5 12V15" stroke="#2e3436" stroke-width="1"/><path d="M805.5 10V15" stroke="#2e3436" stroke-width="1"/><path d="M814.5 12V15" stroke="#2e3436" stroke-width="1"/><path d="M822.5 10V15" stroke="#2e3436" stroke-width="1"/><path d="M831.5 12V15" stroke="#2e3436" stroke-width="1"/><path d="M826 11.5h10l-5 3.5z" fill="#2e3436"/></svg>
<svg class="a" style="left:36px;top:149px;will-change:transform" width="18" height="534" viewBox="0 0 18 534"><rect x="17" y="0" width="1" height="534" fill="#2e3436"/><path d="M12 518.5H18" stroke="#2e3436" stroke-width="1"/><path d="M14 500.5H18" stroke="#2e3436" stroke-width="1"/><path d="M12 483.5H18" stroke="#2e3436" stroke-width="1"/><path d="M14 465.5H18" stroke="#2e3436" stroke-width="1"/><path d="M5 448.5H18" stroke="#2e3436" stroke-width="1"/><path d="M14 430.5H18" stroke="#2e3436" stroke-width="1"/><path d="M12 413.5H18" stroke="#2e3436" stroke-width="1"/><path d="M14 395.5H18" stroke="#2e3436" stroke-width="1"/><path d="M12 378.5H18" stroke="#2e3436" stroke-width="1"/><path d="M14 360.5H18" stroke="#2e3436" stroke-width="1"/><path d="M12 342.5H18" stroke="#2e3436" stroke-width="1"/><path d="M14 325.5H18" stroke="#2e3436" stroke-width="1"/><path d="M12 307.5H18" stroke="#2e3436" stroke-width="1"/><path d="M14 290.5H18" stroke="#2e3436" stroke-width="1"/><path d="M5 272.5H18" stroke="#2e3436" stroke-width="1"/><path d="M14 255.5H18" stroke="#2e3436" stroke-width="1"/><path d="M12 237.5H18" stroke="#2e3436" stroke-width="1"/><path d="M14 220.5H18" stroke="#2e3436" stroke-width="1"/><path d="M12 202.5H18" stroke="#2e3436" stroke-width="1"/><path d="M14 184.5H18" stroke="#2e3436" stroke-width="1"/><path d="M12 167.5H18" stroke="#2e3436" stroke-width="1"/><path d="M14 149.5H18" stroke="#2e3436" stroke-width="1"/><path d="M12 132.5H18" stroke="#2e3436" stroke-width="1"/><path d="M14 114.5H18" stroke="#2e3436" stroke-width="1"/><path d="M5 97.5H18" stroke="#2e3436" stroke-width="1"/><path d="M14 79.5H18" stroke="#2e3436" stroke-width="1"/><path d="M12 61.5H18" stroke="#2e3436" stroke-width="1"/><path d="M14 44.5H18" stroke="#2e3436" stroke-width="1"/><path d="M12 26.5H18" stroke="#2e3436" stroke-width="1"/><path d="M14 9.5H18" stroke="#2e3436" stroke-width="1"/><path d="M13 183v9l4-4.5z" fill="#2e3436"/><text x="5.5" y="456.8" font-size="9.8" fill="#5d5f60" font-family="Liberation Sans">0</text><text x="5.5" y="280.8" font-size="9.8" fill="#5d5f60" font-family="Liberation Sans">5</text><text x="5.5" y="289.6" font-size="9.8" fill="#5d5f60" font-family="Liberation Sans">0</text><text x="5.5" y="298.4" font-size="9.8" fill="#5d5f60" font-family="Liberation Sans">0</text><text x="5.5" y="105.8" font-size="9.8" fill="#5d5f60" font-family="Liberation Sans">1</text><text x="5.5" y="114.6" font-size="9.8" fill="#5d5f60" font-family="Liberation Sans">0</text><text x="5.5" y="123.4" font-size="9.8" fill="#5d5f60" font-family="Liberation Sans">0</text><text x="5.5" y="132.2" font-size="9.8" fill="#5d5f60" font-family="Liberation Sans">0</text></svg>
<div class="a" style="left:54px;top:149px;width:837px;height:534px;background:#fff;overflow:hidden">
<svg class="a" style="left:0;top:0" width="837" height="534" viewBox="54 149 837 534">
 <rect x="472.5" y="327.5" width="360" height="270" fill="#f2f2f2"/>
 <g fill="#ebebeb">
  <path d="M477 395L594 328V461.5H592.5z"/>
  <path d="M597.5 395L714 328V461.5H712.5z"/>
  <path d="M717 396L832.5 328V461.5z"/>
 </g>
 <g fill="#f8f8f8">
  <path d="M477.5 527.5L592.5 461V596z"/>
  <path d="M597.5 528L712.5 461V596z"/>
  <path d="M717 528.5L832.5 461V596z"/>
 </g>
 <path d="M593.2 461.5V597M713.2 461.5V597" stroke="#ebebeb" stroke-width="1.2"/>
 <path d="M472.5 327.5H592.5M594.5 327.5H712.5M714.5 327.5H832" stroke="#555" stroke-width="1.2"/>
 <path d="M472.5 327V597" stroke="#777" stroke-width="1"/>
 <path d="M832.5 461V597" stroke="#888" stroke-width="1"/>
 <path d="M474 597.2H833" stroke="#666" stroke-width="2.6"/>
</svg>
</div>

<!-- canvas scrollbars -->
<div class="a" style="left:895px;top:156px;width:13px;height:527px;background:#c4c6c5;border-left:1px solid #9a9c9b"></div>
<div class="a" style="left:899px;top:246px;width:6px;height:295px;background:#7b7f7f;border-radius:3px"></div>
<div class="a" style="left:54px;top:685px;width:837px;height:13px;background:#c4c6c5;border-top:1px solid #9a9c9b"></div>
<div class="a" style="left:59px;top:689px;width:818px;height:6px;background:#7b7f7f;border-radius:3px"></div>
<svg class="a" style="left:898px;top:141px" width="8" height="9" viewBox="0 0 8 9"><rect width="8" height="9" fill="#fafafa"/><path d="M2.5 2.5l2-1.5v7" stroke="#333" stroke-width="1.2" fill="none"/></svg>
<svg class="a" style="left:898px;top:688px" width="8" height="8" viewBox="0 0 8 8"><g fill="#40a040"><rect x="1" y="1" width="1.5" height="1.5"/><rect x="3" y="3" width="1.5" height="1.5"/></g><g fill="#4060d0"><rect x="0" y="5" width="1.5" height="1.5"/><rect x="2" y="6" width="1.5" height="1.5"/></g><g fill="#d04040"><rect x="5" y="5" width="1.5" height="1.5"/><rect x="6" y="7" width="1.5" height="1"/></g><rect x="4" y="2" width="1.5" height="1.5" fill="#888"/></svg>
<div class="a" style="left:917px;top:133px;width:1px;height:567px;background:#9a9c9b"></div>


<!-- dock -->
<svg class="a" style="left:924px;top:141px" width="19" height="18" viewBox="0 0 19 18"><path d="M0.5 0.5h9l4 4v13h-13z" fill="#f4f4f0" stroke="#333" stroke-width="1"/><path d="M9.5 0.5v4h4" fill="#ddd" stroke="#333" stroke-width=".8"/><path d="M3 9.5h13" stroke="#000" stroke-width="1.3"/><path d="M15 7l4 2.5-4 2.5z" fill="#000"/></svg><div class="t" style="left:943px;top:143px;font-size:14.5px">Export PNG Image (Shift+Ctrl+E)</div><svg class="a" style="left:1231px;top:144px" width="11" height="11" viewBox="0 0 11 11"><rect x=".5" y=".5" width="10" height="10" rx="1.5" fill="#ececeb" stroke="#9a9c9b"/><path d="M3 5.5l4-3v6z" fill="#777"/></svg><div class="btn" style="left:1252px;top:137px;width:26px;height:26px;background:linear-gradient(#f6f6f5,#dededc)"></div><svg class="a" style="left:1259px;top:144px" width="11" height="11" viewBox="0 0 11 11"><rect x=".5" y=".5" width="10" height="10" rx="1.8" fill="#ededec" stroke="#7e807f"/><path d="M3 3l5 5M8 3l-5 5" stroke="#737574" stroke-width="2"/></svg><div class="a" style="left:924px;top:164px;width:355px;height:509px;border:1px solid #b0b2b1"></div><div class="a" style="left:923px;top:678px;width:355px;height:1px;background:#a0a2a1"></div><div class="t" style="left:931px;top:174px;font-size:14px;font-weight:bold">Export area</div><div class="btn" style="left:932px;top:198px;width:83px;height:34px"></div><div class="t" style="left:932px;top:208.5px;width:83px;text-align:center;font-size:14.5px">Page</div><div class="btnp" style="left:1017px;top:198px;width:83px;height:34px"></div><div class="t" style="left:1017px;top:208.5px;width:83px;text-align:center;font-size:14.5px">Drawing</div><div class="btn" style="left:1102px;top:198px;width:83px;height:34px"></div><div class="t" style="left:1102px;top:208.5px;width:83px;text-align:center;font-size:14.5px">Selection</div><div class="btn" style="left:1187px;top:198px;width:83px;height:34px"></div><div class="t" style="left:1187px;top:208.5px;width:83px;text-align:center;font-size:14.5px">Custom</div><div class="t" style="left:948px;top:250px;font-size:14.5px">x0:</div><div class="ent" style="left:996px;top:240px;width:94px;height:35px"><div class="spin" style="left:76px;width:17px;"></div><div class="a" style="left:76px;width:16px;top:16px;height:1px;background:#e4e4e4"></div><svg class="a" style="left:79.0px;top:5px" width="10" height="6"><path d="M1 5L5 0.6L9 5z" fill="#2e3436"/></svg><svg class="a" style="left:79.0px;top:22px" width="10" height="6"><path d="M1 0.6L5 5L9 0.6z" fill="#2e3436"/></svg></div><div class="t" style="left:1006px;top:250px;font-size:14.5px;color:#000">-993.735</div><div class="t" style="left:1120px;top:250px;font-size:14.5px">y0:</div><div class="ent" style="left:1171px;top:240px;width:94px;height:35px"><div class="spin" style="left:76px;width:17px;"></div><div class="a" style="left:76px;width:16px;top:16px;height:1px;background:#e4e4e4"></div><svg class="a" style="left:79.0px;top:5px" width="10" height="6"><path d="M1 5L5 0.6L9 5z" fill="#2e3436"/></svg><svg class="a" style="left:79.0px;top:22px" width="10" height="6"><path d="M1 0.6L5 5L9 0.6z" fill="#2e3436"/></svg></div><div class="t" style="left:1181px;top:250px;font-size:14.5px;color:#000">-5.411</div><div class="t" style="left:948px;top:291px;font-size:14.5px">x1:</div><div class="ent" style="left:996px;top:281px;width:94px;height:35px"><div class="spin" style="left:76px;width:17px;"></div><div class="a" style="left:76px;width:16px;top:16px;height:1px;background:#e4e4e4"></div><svg class="a" style="left:79.0px;top:5px" width="10" height="6"><path d="M1 5L5 0.6L9 5z" fill="#2e3436"/></svg><svg class="a" style="left:79.0px;top:22px" width="10" height="6"><path d="M1 0.6L5 5L9 0.6z" fill="#2e3436"/></svg></div><div class="t" style="left:1006px;top:291px;font-size:14.5px;color:#000">1032.419</div><div class="t" style="left:1120px;top:291px;font-size:14.5px">y1:</div><div class="ent" style="left:1171px;top:281px;width:94px;height:35px"><div class="spin" style="left:76px;width:17px;"></div><div class="a" style="left:76px;width:16px;top:16px;height:1px;background:#e4e4e4"></div><svg class="a" style="left:79.0px;top:5px" width="10" height="6"><path d="M1 5L5 0.6L9 5z" fill="#2e3436"/></svg><svg class="a" style="left:79.0px;top:22px" width="10" height="6"><path d="M1 0.6L5 5L9 0.6z" fill="#2e3436"/></svg></div><div class="t" style="left:1181px;top:291px;font-size:14.5px;color:#000">772.939</div><div class="t" style="left:937px;top:332px;font-size:14.5px">Width:</div><div class="ent" style="left:996px;top:322px;width:94px;height:35px"><div class="spin" style="left:76px;width:17px;"></div><div class="a" style="left:76px;width:16px;top:16px;height:1px;background:#e4e4e4"></div><svg class="a" style="left:79.0px;top:5px" width="10" height="6"><path d="M1 5L5 0.6L9 5z" fill="#2e3436"/></svg><svg class="a" style="left:79.0px;top:22px" width="10" height="6"><path d="M1 0.6L5 5L9 0.6z" fill="#2e3436"/></svg></div><div class="t" style="left:1006px;top:332px;font-size:14.5px;color:#000">2026.153</div><div class="t" style="left:1107px;top:332px;font-size:14.5px">Height:</div><div class="ent" style="left:1171px;top:322px;width:94px;height:35px"><div class="spin" style="left:76px;width:17px;"></div><div class="a" style="left:76px;width:16px;top:16px;height:1px;background:#e4e4e4"></div><svg class="a" style="left:79.0px;top:5px" width="10" height="6"><path d="M1 5L5 0.6L9 5z" fill="#2e3436"/></svg><svg class="a" style="left:79.0px;top:22px" width="10" height="6"><path d="M1 0.6L5 5L9 0.6z" fill="#2e3436"/></svg></div><div class="t" style="left:1181px;top:332px;font-size:14.5px;color:#000">778.350</div><div class="t" style="left:1163px;top:372px;font-size:14.5px">Units:</div><div class="btn" style="left:1204px;top:363px;width:67px;height:33px"></div><div class="t" style="left:1213px;top:372px;font-size:14.5px">px</div><svg class="a" style="left:1248px;top:377px" width="11" height="6"><path d="M0 0L5.5 6L11 0z" fill="#2e3436"/></svg><div class="t" style="left:931px;top:406px;font-size:14px;font-weight:bold">Image size</div><div class="t" style="left:934px;top:437px;font-size:14.5px">Width:</div><div class="ent" style="left:986px;top:427px;width:94px;height:35px"><div class="spin" style="left:76px;width:17px;"></div><div class="a" style="left:76px;width:16px;top:16px;height:1px;background:#e4e4e4"></div><svg class="a" style="left:79.0px;top:5px" width="10" height="6"><path d="M1 5L5 0.6L9 5z" fill="#2e3436"/></svg><svg class="a" style="left:79.0px;top:22px" width="10" height="6"><path d="M1 0.6L5 5L9 0.6z" fill="#2e3436"/></svg></div><div class="t" style="left:996px;top:437px;font-size:14.5px;color:#000">2026</div><div class="t" style="left:1087px;top:437px;font-size:14.5px">pixels at</div><div class="ent" style="left:1149px;top:427px;width:94px;height:35px"><div class="spin" style="left:76px;width:17px;"></div><div class="a" style="left:76px;width:16px;top:16px;height:1px;background:#e4e4e4"></div><svg class="a" style="left:79.0px;top:5px" width="10" height="6"><path d="M1 5L5 0.6L9 5z" fill="#2e3436"/></svg><svg class="a" style="left:79.0px;top:22px" width="10" height="6"><path d="M1 0.6L5 5L9 0.6z" fill="#2e3436"/></svg></div><div class="t" style="left:1159px;top:437px;font-size:14.5px;color:#000">90.00</div><div class="t" style="left:1251px;top:437px;font-size:14.5px">dpi</div><div class="t" style="left:932px;top:478px;font-size:14.5px">Height:</div><div class="ent" style="left:986px;top:468px;width:94px;height:35px"><div class="spin" style="left:76px;width:17px;"></div><div class="a" style="left:76px;width:16px;top:16px;height:1px;background:#e4e4e4"></div><svg class="a" style="left:79.0px;top:5px" width="10" height="6"><path d="M1 5L5 0.6L9 5z" fill="#2e3436"/></svg><svg class="a" style="left:79.0px;top:22px" width="10" height="6"><path d="M1 0.6L5 5L9 0.6z" fill="#2e3436"/></svg></div><div class="t" style="left:996px;top:478px;font-size:14.5px;color:#000">778</div><div class="t" style="left:1087px;top:478px;font-size:14.5px">pixels at</div><div class="ent dis" style="left:1149px;top:468px;width:94px;height:35px"><div class="spin" style="left:76px;width:17px;"></div><div class="a" style="left:76px;width:16px;top:16px;height:1px;background:#e4e4e4"></div><svg class="a" style="left:79.0px;top:5px" width="10" height="6"><path d="M1 5L5 0.6L9 5z" fill="#a5a7a8"/></svg><svg class="a" style="left:79.0px;top:22px" width="10" height="6"><path d="M1 0.6L5 5L9 0.6z" fill="#a5a7a8"/></svg></div><div class="t" style="left:1159px;top:478px;font-size:14.5px;color:#a3a5a6">90.00</div><div class="t" style="left:1251px;top:478px;font-size:14.5px;color:#a3a5a6">dpi</div><div class="t" style="left:931px;top:513px;font-size:14px;font-weight:bold">Filename</div><div class="ent" style="left:932px;top:534px;width:213px;height:35px"></div><div class="t" style="left:938px;top:544px;font-size:14.5px;color:#000">/home/kmurarka/path4239.png</div><div class="btn" style="left:1156px;top:534px;width:111px;height:35px"></div><svg class="a" style="left:1165px;top:542px" width="17" height="18" viewBox="0 0 17 18"><rect x=".5" y=".5" width="12" height="15" fill="#f4f4f0" stroke="#888"/><path d="M2.5 3.5h8M2.5 6h8M2.5 8.5h8M2.5 11h6" stroke="#aaa" stroke-width=".8"/><path d="M8 17c-2 0-3-2-3-4v-3c0-1 1.5-1 1.5 0v-5c0-1 1.5-1 1.5 0v4l4 1c1 .3 1.5 1 1.5 2v1c0 2-2 4-4 4z" fill="#f0b868" stroke="#a06020" stroke-width=".8"/></svg><div class="t" style="left:1186px;top:544.5px;font-size:14.5px">Export As...</div><div class="a" style="left:930px;top:577px;width:15px;height:15px;border:1px solid #c8c9c8;border-radius:3px;background:#f0f0ef"></div><div class="t" style="left:952px;top:578px;font-size:14.7px;color:#a3a5a6">Batch export 2 selected objects</div><div class="a" style="left:930px;top:601px;width:15px;height:15px;border:1px solid #a7a9aa;border-radius:3px;background:linear-gradient(#f4f4f4,#dcdcdc)"></div><svg class="a" style="left:931px;top:600px" width="15" height="14" viewBox="0 0 15 14"><path d="M2.5 7l3.5 4 7-10" fill="none" stroke="#2e3436" stroke-width="2.6"/></svg><div class="t" style="left:952px;top:601px;font-size:15px">Hide all except selected</div><div class="a" style="left:929px;top:622px;width:345px;height:4px;border:1px solid #a7a9aa;border-radius:2px;background:#d8d8d6"></div><div class="a" style="left:933px;top:640px;width:15px;height:15px;border:1px solid #a7a9aa;border-radius:3px;background:linear-gradient(#f8f8f8,#e0e0e0)"></div><div class="t" style="left:955px;top:641.2px;font-size:14.8px">Close when complete</div><div class="btn" style="left:1192px;top:631px;width:79px;height:34px"></div><svg class="a" style="left:1198px;top:637px" width="21" height="21" viewBox="0 0 21 21"><path d="M1 12l4-3 4 4 9-12 2 2-11 17z" fill="#8fe060" stroke="#3a9020" stroke-width="1"/></svg><div class="t" style="left:1222px;top:641.5px;font-size:14.5px">Export</div>
<!-- commands bar -->
<div class="a" style="left:1278px;top:164px;width:1px;height:515px;background:#b0b2b1"></div><div class="a" style="left:1292px;top:144px"><svg width="23" height="22" viewBox="0 0 23 22"><defs><linearGradient id="np2" x1="0" y1="0" x2="1" y2="1"><stop offset="0" stop-color="#fdfdfd"/><stop offset="1" stop-color="#e2e2e2"/></linearGradient></defs><rect x="2" y="21" width="17" height="1" fill="#000" opacity=".15"/><path d="M1.5 2.5Q1.5 1.5 2.5 1.5H17.5Q18.5 1.5 18.5 2.5V19.5Q18.5 20.5 17.5 20.5H2.5Q1.5 20.5 1.5 19.5z" fill="url(#np2)" stroke="#9a9a9a"/><path d="M16.5 1.3l1.6 3.2 3.5.5-2.5 2.4.6 3.5-3.2-1.7-3.2 1.7.6-3.5-2.5-2.4 3.5-.5z" fill="#fffbe0" stroke="#f0c800" stroke-width="1.4" stroke-linejoin="round"/></svg></div><div class="a" style="left:1292px;top:179px"><svg width="23" height="20" viewBox="0 0 23 20"><path d="M2 2h7l2 2h9v13h-18z" fill="#8a6a4a" stroke="#5a4028" stroke-width="1"/><rect x="5" y="5" width="13" height="9" fill="#fafafa" stroke="#888" stroke-width=".8"/><path d="M7 8h9M7 10.5h9" stroke="#999" stroke-width=".8"/><path d="M1 11h21l-2 7h-17z" fill="#c8aa88" stroke="#6a5030" stroke-width="1"/></svg></div><div class="a" style="left:1292px;top:212px"><svg width="22" height="23" viewBox="0 0 22 23"><defs><linearGradient id="cab" x1="0" y1="0" x2="1" y2="0"><stop offset="0" stop-color="#cfcfcf"/><stop offset=".5" stop-color="#f6f6f6"/><stop offset="1" stop-color="#c4c4c4"/></linearGradient></defs><path d="M2.5 4Q2.5 1.5 5 1.5H17Q19.5 1.5 19.5 4V21.5H2.5z" fill="url(#cab)" stroke="#8a8a8a"/><rect x="4.5" y="13.5" width="13" height="6" fill="#f4f4f4" stroke="#777" stroke-width=".9"/><path d="M8 15.5v2h6v-2" fill="none" stroke="#666" stroke-width=".9"/><path d="M8.8 1v6H5.5L11 12.5 16.5 7h-3.3V1z" fill="#88d858" stroke="#3c9a1c" stroke-width=".9"/></svg></div><div class="a" style="left:1292px;top:248px"><svg width="23" height="20" viewBox="0 0 23 20"><rect x="5" y="1" width="13" height="5" fill="#eee" stroke="#555" stroke-width=".8"/><rect x="1" y="5" width="21" height="10" rx="2" fill="#444" stroke="#222"/><rect x="2" y="6" width="19" height="3" fill="#888"/><path d="M5 11h13l1 8h-15z" fill="#f4f4f4" stroke="#333" stroke-width=".8"/><path d="M7 15l3-1 3 2 3-2" stroke="#60a060" stroke-width="1" fill="none"/><rect x="4" y="17" width="15" height="2.5" fill="#333"/></svg></div><div class="a" style="left:1292px;top:294px"><svg width="20" height="18" viewBox="0 0 20 18"><path d="M6.5 0.5h8l4 4v13h-12z" fill="#f4f4f0" stroke="#333" stroke-width="1"/><path d="M14.5 .5v4h4" fill="#ddd" stroke="#333" stroke-width=".8"/><path d="M1 8.5h10" stroke="#000" stroke-width="1.3"/><path d="M10 6l4 2.5-4 2.5z" fill="#000"/></svg></div><div class="a" style="left:1292px;top:328px"><svg width="20" height="18" viewBox="0 0 20 18"><path d="M0.5 0.5h8l4 4v13h-12z" fill="#f4f4f0" stroke="#333" stroke-width="1"/><path d="M8.5 .5v4h4" fill="#ddd" stroke="#333" stroke-width=".8"/><path d="M5 9.5h10" stroke="#000" stroke-width="1.3"/><path d="M15 7l4 2.5-4 2.5z" fill="#000"/></svg></div><div class="a" style="left:1292px;top:373px"><svg width="22" height="18" viewBox="0 0 22 18"><path d="M8 1l-7 6 7 6v-3.5h6c3 0 4 1.5 4 3s-1 2.5-3 2.5h-2v2h3c4 0 6-2 6-5s-2-6-7-6h-7v-5z" fill="#f8e060" stroke="#b09010" stroke-width="1"/></svg></div><div class="a" style="left:1292px;top:407px"><svg width="22" height="18" viewBox="0 0 22 18"><defs><pattern id="hp" width="2" height="2" patternUnits="userSpaceOnUse"><rect width="1" height="1" fill="#5a9a4a"/><rect x="1" y="1" width="1" height="1" fill="#5a9a4a"/><rect x="1" width="1" height="1" fill="#b8d8a8"/><rect y="1" width="1" height="1" fill="#b8d8a8"/></pattern></defs><path d="M14 1l7 6-7 6v-3.5h-6c-3 0-4 1.5-4 3s1 2.5 3 2.5h2v2h-3c-4 0-6-2-6-5s2-6 7-6h7v-5z" fill="url(#hp)"/></svg></div><div class="a" style="left:1292px;top:452px"><svg width="22" height="22" viewBox="0 0 22 22"><rect x="1.5" y="1.5" width="12" height="13" fill="#f8f8f8" stroke="#666"/><path d="M3.5 4.5h8M3.5 7h8M3.5 9.5h8M3.5 12h5" stroke="#777" stroke-width=".8"/><rect x="8.5" y="7.5" width="12" height="13" fill="#f8f8f8" stroke="#666"/><path d="M10.5 10.5h8M10.5 13h8M10.5 15.5h8M10.5 18h5" stroke="#777" stroke-width=".8"/></svg></div><div class="a" style="left:1292px;top:486px"><svg width="22" height="22" viewBox="0 0 22 22"><path d="M5 1l6 11M17 1l-6 11" stroke="#888" stroke-width="1.5"/><path d="M5.5 1.5l5.5 10M16.5 1.5l-5.5 10" stroke="#eee" stroke-width=".6"/><circle cx="6" cy="16" r="4" fill="none" stroke="#d01010" stroke-width="2.5"/><circle cx="16" cy="16" r="4" fill="none" stroke="#d01010" stroke-width="2.5"/></svg></div><div class="a" style="left:1292px;top:520px"><svg width="22" height="22" viewBox="0 0 22 22"><rect x="1.5" y="3.5" width="15" height="17" rx="1.5" fill="#d8a868" stroke="#8a5a20"/><rect x="5" y="1.5" width="8" height="4" rx="1" fill="#ddd" stroke="#666" stroke-width=".8"/><rect x="8.5" y="9.5" width="12" height="12" fill="#fafafa" stroke="#666"/><path d="M10.5 12.5h8M10.5 15h8M10.5 17.5h8" stroke="#777" stroke-width=".8"/></svg></div><div class="a" style="left:1292px;top:565px"><svg width="22" height="22" viewBox="0 0 22 22"><circle cx="10" cy="10" r="7.3" fill="#dcecf8" stroke="#1a1a1a" stroke-width="2"/><rect x="6" y="6" width="8" height="8" fill="none" stroke="#222" stroke-dasharray="1.2,1" stroke-width="1.1"/><path d="M15.5 15.5l3 3" stroke="#111" stroke-width="2.8" stroke-linecap="round"/></svg></div><div class="a" style="left:1292px;top:599px"><svg width="22" height="22" viewBox="0 0 22 22"><circle cx="10" cy="10" r="7.3" fill="#dcecf8" stroke="#1a1a1a" stroke-width="2"/><rect x="5.5" y="5.5" width="6" height="6" fill="#f0d080" stroke="#555" stroke-width=".8"/><rect x="8.5" y="8.5" width="6" height="6" fill="#f0d080" stroke="#555" stroke-width=".8"/><path d="M15.5 15.5l3 3" stroke="#111" stroke-width="2.8" stroke-linecap="round"/></svg></div><div class="a" style="left:1292px;top:633px"><svg width="22" height="22" viewBox="0 0 22 22"><circle cx="10" cy="10" r="7.3" fill="#dcecf8" stroke="#1a1a1a" stroke-width="2"/><rect x="6.5" y="5.5" width="7" height="9" fill="#fff" stroke="#333" stroke-width="1"/><path d="M15.5 15.5l3 3" stroke="#111" stroke-width="2.8" stroke-linecap="round"/></svg></div><div class="a" style="left:1292px;top:279px;width:22px;height:1px;background:#d0d0ce"></div><div class="a" style="left:1292px;top:359px;width:22px;height:1px;background:#d0d0ce"></div><div class="a" style="left:1292px;top:440px;width:22px;height:1px;background:#d0d0ce"></div><div class="a" style="left:1292px;top:553px;width:22px;height:1px;background:#d0d0ce"></div><div class="btnp" style="left:1329px;top:139px;width:32px;height:32px"></div><div class="a" style="left:1335px;top:145px"><svg width="20" height="20" viewBox="0 0 20 20"><path d="M4 4l9 9" stroke="#000" stroke-width="1.5"/><path d="M14.5 14.5l-5-1.5 3.5-3.5z" fill="#000"/><path d="M4 0.8l3.2 3.2-3.2 3.2-3.2-3.2z" fill="#8080ff" stroke="#0000e0" stroke-width="1"/><path d="M16 12.8l3.2 3.2-3.2 3.2-3.2-3.2z" fill="#80c080" stroke="#008000" stroke-width="1"/></svg></div><div class="a" style="left:1333px;top:177px;width:21px;height:1px;background:#d0d0ce"></div><div class="a" style="left:1335px;top:191px"><svg width="20" height="20" viewBox="0 0 20 20"><path d="M4 4l9 9" stroke="#000" stroke-width="1.5"/><path d="M14.5 14.5l-5-1.5 3.5-3.5z" fill="#000"/><path d="M4 0.8l3.2 3.2-3.2 3.2-3.2-3.2z" fill="#8080ff" stroke="#0000e0" stroke-width="1"/><path d="M16 12.8l3.2 3.2-3.2 3.2-3.2-3.2z" fill="#80c080" stroke="#008000" stroke-width="1"/></svg></div><svg class="a" style="left:1336px;top:226px" width="18" height="18" viewBox="0 0 18 18"><path d="M15.5 1v15.5H1" fill="none" stroke="#2a7a2a" stroke-width="1" stroke-dasharray="1.5,1"/></svg><svg class="a" style="left:1336px;top:260px" width="18" height="20" viewBox="0 0 18 20"><path d="M15.5 1v15.5H1" fill="none" stroke="#333" stroke-width="1" stroke-dasharray="1.5,1"/><path d="M15.5 13l3 3-3 3-3-3z" fill="#a0c8a0" stroke="#444" stroke-width=".8"/></svg><svg class="a" style="left:1336px;top:294px" width="18" height="18" viewBox="0 0 18 18"><path d="M14.5 5v11.5H1" fill="none" stroke="#333" stroke-width="1" stroke-dasharray="1.5,1"/><path d="M14.5 1l2.5 2.5-2.5 2.5-2.5-2.5z" fill="#a0c8a0" stroke="#444" stroke-width=".8"/></svg><svg class="a" style="left:1336px;top:328px" width="18" height="18" viewBox="0 0 18 18"><path d="M14.5 2.5v14H1" fill="none" stroke="#333" stroke-width="1" stroke-dasharray="1.5,1"/><circle cx="4.5" cy="6" r="1.6" fill="#a0c8a0" stroke="#444" stroke-width=".8"/></svg><div class="a" style="left:1333px;top:359px;width:21px;height:1px;background:#d0d0ce"></div><div class="btnp" style="left:1329px;top:367px;width:32px;height:32px"></div><div class="a" style="left:1335px;top:373px"><svg width="20" height="20" viewBox="0 0 20 20"><path d="M4 4l9 9" stroke="#000" stroke-width="1.5"/><path d="M14.5 14.5l-5-1.5 3.5-3.5z" fill="#000"/><path d="M4 0.8l3.2 3.2-3.2 3.2-3.2-3.2z" fill="#8080ff" stroke="#0000e0" stroke-width="1"/><path d="M16 12.8l3.2 3.2-3.2 3.2-3.2-3.2z" fill="#80c080" stroke="#008000" stroke-width="1"/></svg></div><svg class="a" style="left:1336px;top:407px" width="18" height="18" viewBox="0 0 18 18"><path d="M2 2c6 1 12 5 12 9 0 4-4 5-6 5" fill="none" stroke="#108010" stroke-width="1.6"/></svg><svg class="a" style="left:1335px;top:441px" width="20" height="20" viewBox="0 0 20 20"><path d="M1 17L19 3M1 13L19 7" stroke="#444" stroke-width="1"/><circle cx="10" cy="10" r="2.3" fill="#80c080" stroke="#008000"/></svg><svg class="a" style="left:1336px;top:475px" width="18" height="20" viewBox="0 0 18 20"><path d="M2 2c6 0 10 4 10 8 0 4-4 6-6 7" fill="none" stroke="#444" stroke-width="1.2"/><path d="M10 12.5l2.5 2.5-2.5 2.5-2.5-2.5z" fill="#80c080" stroke="#008000" stroke-width=".8"/></svg><svg class="a" style="left:1336px;top:509px" width="18" height="18" viewBox="0 0 18 18"><path d="M2 5c4-1 8 1 10 5 1 3-1 5-3 6" fill="none" stroke="#444" stroke-width="1.2"/><rect x="6.5" y="2.5" width="4" height="4" fill="#80c080" stroke="#008000" stroke-width=".8"/></svg><svg class="a" style="left:1335px;top:542px" width="20" height="20" viewBox="0 0 20 20"><path d="M1 15L17 4" stroke="#444" stroke-width="1"/><path d="M3 17l4-6M7 15l4-6M12 11l4-6M15 9l4-6" stroke="#d02020" stroke-width="1.3"/><circle cx="9" cy="9.5" r="2" fill="#80c080" stroke="#008000" stroke-width=".8"/></svg><div class="a" style="left:1333px;top:575px;width:21px;height:1px;background:#d0d0ce"></div><div class="btnp" style="left:1329px;top:583px;width:32px;height:32px"></div><div class="a" style="left:1335px;top:589px"><svg width="20" height="20" viewBox="0 0 20 20"><path d="M4 4l9 9" stroke="#000" stroke-width="1.5"/><path d="M14.5 14.5l-5-1.5 3.5-3.5z" fill="#000"/><path d="M4 0.8l3.2 3.2-3.2 3.2-3.2-3.2z" fill="#8080ff" stroke="#0000e0" stroke-width="1"/><path d="M16 12.8l3.2 3.2-3.2 3.2-3.2-3.2z" fill="#80c080" stroke="#008000" stroke-width="1"/></svg></div><svg class="a" style="left:1336px;top:622px" width="16" height="16" viewBox="0 0 16 16"><path d="M14.5 1v14H1" fill="none" stroke="#444" stroke-width="1"/><circle cx="8" cy="7" r="1.8" fill="#80c080" stroke="#008000" stroke-width=".8"/></svg>
<!-- palette -->
<svg class="a" style="left:0;top:702px" width="1366" height="16" viewBox="0 0 1366 16"><rect x="1" y="0" width="16" height="16" fill="#fff"/><path d="M1.5 0.5L16.5 15.5M16.5 0.5L1.5 15.5" stroke="#8a1a1a" stroke-width="1.6"/><rect x="17" y="0" width="16" height="16" fill="#000000"/><rect x="33" y="0" width="16" height="16" fill="#1a1a1a"/><rect x="49" y="0" width="16" height="16" fill="#333333"/><rect x="65" y="0" width="16" height="16" fill="#4d4d4d"/><rect x="81" y="0" width="16" height="16" fill="#666666"/><rect x="97" y="0" width="16" height="16" fill="#808080"/><rect x="113" y="0" width="16" height="16" fill="#999999"/><rect x="129" y="0" width="16" height="16" fill="#b3b3b3"/><rect x="145" y="0" width="16" height="16" fill="#cccccc"/><rect x="161" y="0" width="16" height="16" fill="#e6e6e6"/><rect x="177" y="0" width="16" height="16" fill="#ececec"/><rect x="193" y="0" width="16" height="16" fill="#f2f2f2"/><rect x="209" y="0" width="16" height="16" fill="#f9f9f9"/><rect x="225" y="0" width="16" height="16" fill="#ffffff"/><rect x="241" y="0" width="16" height="16" fill="#800000"/><rect x="257" y="0" width="16" height="16" fill="#ff0000"/><rect x="273" y="0" width="16" height="16" fill="#808000"/><rect x="289" y="0" width="16" height="16" fill="#ffff00"/><rect x="305" y="0" width="16" height="16" fill="#008000"/><rect x="321" y="0" width="16" height="16" fill="#00ff00"/><rect x="337" y="0" width="16" height="16" fill="#008080"/><rect x="353" y="0" width="16" height="16" fill="#00ffff"/><rect x="369" y="0" width="16" height="16" fill="#000080"/><rect x="385" y="0" width="16" height="16" fill="#0000ff"/><rect x="401" y="0" width="16" height="16" fill="#800080"/><rect x="417" y="0" width="16" height="16" fill="#ff00ff"/><rect x="433" y="0" width="16" height="16" fill="#2b0000"/><rect x="449" y="0" width="16" height="16" fill="#550000"/><rect x="465" y="0" width="16" height="16" fill="#800000"/><rect x="481" y="0" width="16" height="16" fill="#aa0000"/><rect x="497" y="0" width="16" height="16" fill="#d40000"/><rect x="513" y="0" width="16" height="16" fill="#ff0000"/><rect x="529" y="0" width="16" height="16" fill="#ff2a2a"/><rect x="545" y="0" width="16" height="16" fill="#ff5555"/><rect x="561" y="0" width="16" height="16" fill="#ff8080"/><rect x="577" y="0" width="16" height="16" fill="#ffaaaa"/><rect x="593" y="0" width="16" height="16" fill="#ffd5d5"/><rect x="609" y="0" width="16" height="16" fill="#280b0b"/><rect x="625" y="0" width="16" height="16" fill="#501616"/><rect x="641" y="0" width="16" height="16" fill="#782121"/><rect x="657" y="0" width="16" height="16" fill="#a02c2c"/><rect x="673" y="0" width="16" height="16" fill="#c83737"/><rect x="689" y="0" width="16" height="16" fill="#d35f5f"/><rect x="705" y="0" width="16" height="16" fill="#de8787"/><rect x="721" y="0" width="16" height="16" fill="#e9afaf"/><rect x="737" y="0" width="16" height="16" fill="#f4d7d7"/><rect x="753" y="0" width="16" height="16" fill="#241c1c"/><rect x="769" y="0" width="16" height="16" fill="#483737"/><rect x="785" y="0" width="16" height="16" fill="#6c5353"/><rect x="801" y="0" width="16" height="16" fill="#916f6f"/><rect x="817" y="0" width="16" height="16" fill="#ac9393"/><rect x="833" y="0" width="16" height="16" fill="#c8b7b7"/><rect x="849" y="0" width="16" height="16" fill="#e3dbdb"/><rect x="865" y="0" width="16" height="16" fill="#2b1100"/><rect x="881" y="0" width="16" height="16" fill="#552200"/><rect x="897" y="0" width="16" height="16" fill="#803300"/><rect x="913" y="0" width="16" height="16" fill="#aa4400"/><rect x="929" y="0" width="16" height="16" fill="#d45500"/><rect x="945" y="0" width="16" height="16" fill="#ff6600"/><rect x="961" y="0" width="16" height="16" fill="#ff7f2a"/><rect x="977" y="0" width="16" height="16" fill="#ff9955"/><rect x="993" y="0" width="16" height="16" fill="#ffb380"/><rect x="1009" y="0" width="16" height="16" fill="#ffccaa"/><rect x="1025" y="0" width="16" height="16" fill="#ffe6d5"/><rect x="1041" y="0" width="16" height="16" fill="#28170b"/><rect x="1057" y="0" width="16" height="16" fill="#502d16"/><rect x="1073" y="0" width="16" height="16" fill="#784421"/><rect x="1089" y="0" width="16" height="16" fill="#a05a2c"/><rect x="1105" y="0" width="16" height="16" fill="#c87137"/><rect x="1121" y="0" width="16" height="16" fill="#d38d5f"/><rect x="1137" y="0" width="16" height="16" fill="#deaa87"/><rect x="1153" y="0" width="16" height="16" fill="#e9c6af"/><rect x="1169" y="0" width="16" height="16" fill="#f4e3d7"/><rect x="1185" y="0" width="16" height="16" fill="#241f1c"/><rect x="1201" y="0" width="16" height="16" fill="#483e37"/><rect x="1217" y="0" width="16" height="16" fill="#6c5d53"/><rect x="1233" y="0" width="16" height="16" fill="#917c6f"/><rect x="1249" y="0" width="16" height="16" fill="#ac9d93"/><rect x="1265" y="0" width="16" height="16" fill="#c8beb7"/><rect x="1281" y="0" width="16" height="16" fill="#e3dedb"/><rect x="1297" y="0" width="16" height="16" fill="#2b2200"/><rect x="1313" y="0" width="16" height="16" fill="#554400"/><rect x="1329" y="0" width="16" height="16" fill="#806600"/><rect x="1345" y="0" width="8" height="16" fill="#aa8800"/></svg><svg class="a" style="left:1357px;top:702px" width="6" height="10"><path d="M6 0L0 5L6 10z" fill="#555"/></svg><div class="a" style="left:0;top:720px;width:1354px;height:13px;background:#c4c6c5;border-top:1px solid #b0b2b1"></div><div class="a" style="left:3px;top:724px;width:258px;height:6px;background:#7b7f7f;border-radius:3px"></div><div class="t" style="left:2px;top:738px;font-size:11.5px">Fill:</div><div class="t" style="left:2px;top:754px;font-size:11.5px">Stroke:</div><div class="t" style="left:72px;top:738px;font-size:11.5px">N/A</div><div class="t" style="left:72px;top:754px;font-size:11.5px">N/A</div><div class="t" style="left:126px;top:745px;font-size:13px">O:</div><div class="ent dis" style="left:141px;top:736px;width:46px;height:31px"><div class="spin" style="left:31px;width:14px"></div><div class="a" style="left:31px;width:14px;top:15px;height:1px;background:#e2e2e2"></div><svg class="a" style="left:33px;top:3px" width="10" height="6"><path d="M1 5L5 0.6L9 5z" fill="#a5a7a8"/></svg><svg class="a" style="left:33px;top:20px" width="10" height="6"><path d="M1 0.6L5 5L9 0.6z" fill="#a5a7a8"/></svg></div><div class="a" style="left:151px;top:740px;width:17.5px;height:20px;overflow:hidden"><div class="t" style="left:0;top:4px;font-size:13.8px;color:#a3a5a6">100</div></div><div class="a" style="left:190px;top:735px;width:1px;height:33px;background:#d0d0ce"></div><svg class="a" style="left:196px;top:744px" width="13" height="12" viewBox="0 0 13 12"><path d="M2 1l1.5 2M5 0v2.5M8 0v2.5M11 1l-1.5 2" stroke="#111" stroke-width="1"/><path d="M.5 7c3-5 9-5 12 0-3 5-9 5-12 0z" fill="#fff" stroke="#111" stroke-width="1.3"/><circle cx="6.5" cy="7" r="2.5" fill="#111"/></svg><svg class="a" style="left:219px;top:744px" width="12" height="14" viewBox="0 0 11 13"><path d="M2 1.5H7.5V5.5" fill="none" stroke="#111" stroke-width="1.3"/><path d="M1.2 5.7L8.4 5.3L9.6 11.2L1.6 11.8z" fill="url(#lkg)" stroke="#111" stroke-width="1.1" stroke-linejoin="round"/><circle cx="5.2" cy="7.8" r="1" fill="#000"/><rect x="4.8" y="8" width="0.9" height="2.2" fill="#000"/></svg><div class="btn" style="left:237px;top:736px;width:90px;height:31px"></div><div class="t" style="left:247px;top:744px;font-size:13px">•Layer 1</div><svg class="a" style="left:305px;top:748px" width="10" height="6"><path d="M0 0L4.7 4.6L9.4 0z" fill="#2e3436"/></svg><div class="t" style="left:333px;top:744.5px;font-size:14.75px">No objects selected. Click, Shift+click, Alt+scroll mouse on top of objects, or drag around objects to select.</div><div class="a" style="left:1205px;top:735px;width:1px;height:33px;background:#d0d0ce"></div><div class="t" style="left:1208px;top:737px;font-size:12px">X:</div><div class="t" style="left:1208px;top:754px;font-size:12px">Y:</div><div class="t" style="left:1221px;top:736.5px;font-size:11.6px;-webkit-text-stroke:0.35px #2e3436;transform:scaleY(1.12);transform-origin:0 0;font-family:'Liberation Mono',monospace;color:#2e3436">1177.14</div><div class="t" style="left:1228px;top:753px;font-size:11.6px;-webkit-text-stroke:0.35px #2e3436;transform:scaleY(1.12);transform-origin:0 0;font-family:'Liberation Mono',monospace;color:#2e3436">740.00</div><div class="t" style="left:1278px;top:745px;font-size:12.2px">Z:</div><div class="ent" style="left:1291px;top:736px;width:55px;height:31px"><div class="spin" style="left:39px;width:15px"></div><div class="a" style="left:39px;width:15px;top:15px;height:1px;background:#e2e2e2"></div><svg class="a" style="left:41px;top:3px" width="10" height="6"><path d="M1 5L5 0.6L9 5z" fill="#2e3436"/></svg><svg class="a" style="left:41px;top:20px" width="10" height="6"><path d="M1 0.6L5 5L9 0.6z" fill="#2e3436"/></svg></div><div class="t" style="left:1290px;top:745.5px;width:37.5px;text-align:right;font-size:11.6px;color:#000">35%</div><svg class="a" style="left:1300px;top:670px" width="50" height="11"><path d="M1.5 0.5L6 5L1.5 9.5z" fill="#b8b8b8"/><path d="M43.5 0.5L48 5L43.5 9.5z" fill="#b8b8b8"/></svg><div class="a" style="left:1075px;top:670px;width:291px;height:46px;background:rgba(52,52,52,0.92);border-radius:5px"></div><div class="t" style="left:1088px;top:686px;font-size:14.8px;color:#eeeeec">Export the bitmap file with these settings</div>

</body></html>
